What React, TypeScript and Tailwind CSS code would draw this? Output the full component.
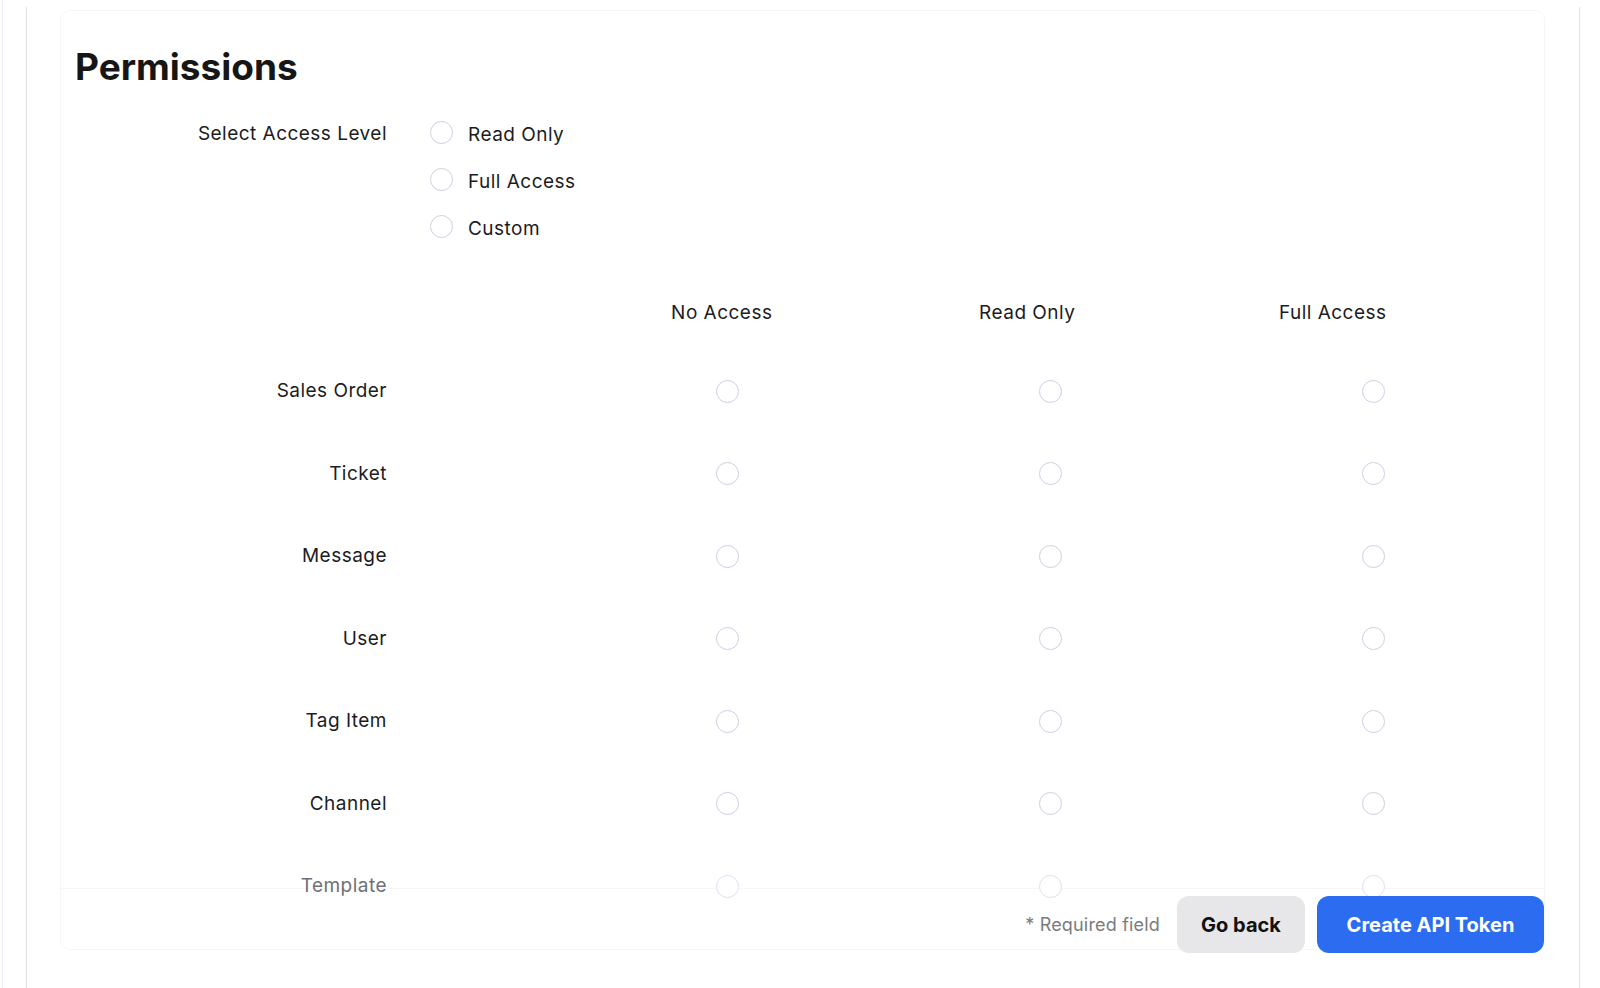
import React from "react";

const Radio = ({ faded = false }: { faded?: boolean }) => (
  <span
    className={
      "block w-[23px] h-[23px] rounded-full bg-white border-[1.5px] shrink-0 " +
      (faded ? "border-[#e0dfee]" : "border-[#cfcde4]")
    }
  />
);

const rows = ["Sales Order", "Ticket", "Message", "User", "Tag Item", "Channel", "Template"];

const txt = "text-[19px] leading-[28px] tracking-[0.025em]";

export default function App() {
  return (
    <div
      className="w-[1600px] h-[988px] bg-white overflow-hidden flex text-[#1c1c1e]"
      style={{ fontFamily: "Inter, 'Noto Sans', sans-serif" }}
    >
      <div className="ml-[2px] h-full border-l border-[#eeeef6] pl-[23px]">
        <div className="mt-[7px] h-[981px] w-[1554px] border-l border-r border-[#e1e0ef] pt-[3px] pl-[33px]">
          <div className="relative z-0 w-[1485px] h-[940px] rounded-[10px] border border-[#f6f6f8] pl-[14px] pt-[36px]">
            <div className="absolute -z-10 left-0 right-0 bottom-0 h-[61px] border-t border-[#f7f7f9]" />

            <h1 className="text-[37px] leading-[40px] font-bold text-[#161616]">Permissions</h1>

            <div className="mt-[33px] flex items-start">
              <div className={"w-[312px] text-right " + txt}>Select Access Level</div>
              <div className="ml-[43px] mt-[1px] flex flex-col gap-[19px]">
                {["Read Only", "Full Access", "Custom"].map((o) => (
                  <label key={o} className="flex items-start h-[28px]">
                    <Radio />
                    <span className={"ml-[15px] " + txt}>{o}</span>
                  </label>
                ))}
              </div>
            </div>

            <div className="mt-[56px] flex h-[28px]">
              <div className="w-[494px] shrink-0" />
              {["No Access", "Read Only", "Full Access"].map((h) => (
                <div key={h} className={"w-[305.5px] shrink-0 text-center " + txt}>
                  {h}
                </div>
              ))}
            </div>

            <div className="mt-[50px] flex flex-col gap-[54.5px]">
              {rows.map((r) => {
                const faded = r === "Template";
                return (
                  <div key={r} className="flex items-center h-[28px]">
                    <div className={"w-[312px] shrink-0 text-right " + txt + (faded ? " text-[#707074]" : "")}>
                      {r}
                    </div>
                    <div className="w-[179px] shrink-0" />
                    {[0, 1, 2].map((i) => (
                      <div key={i} className="w-[323px] shrink-0 flex justify-center">
                        <Radio faded={faded} />
                      </div>
                    ))}
                  </div>
                );
              })}
            </div>

            <div className="absolute right-0 bottom-[-4px] flex items-center">
              <span className="text-[18px] leading-[28px] text-[#7b7b80] tracking-[0.01em]">* Required field</span>
              <button className="ml-[17px] w-[128px] h-[57px] rounded-[12px] bg-[#e7e6e8] text-[20px] font-bold text-[#111]">
                Go back
              </button>
              <button className="ml-[12px] w-[227px] h-[57px] rounded-[12px] bg-[#2b6cf0] text-[20px] font-bold text-white">
                Create API Token
              </button>
            </div>
          </div>
        </div>
      </div>
    </div>
  );
}
